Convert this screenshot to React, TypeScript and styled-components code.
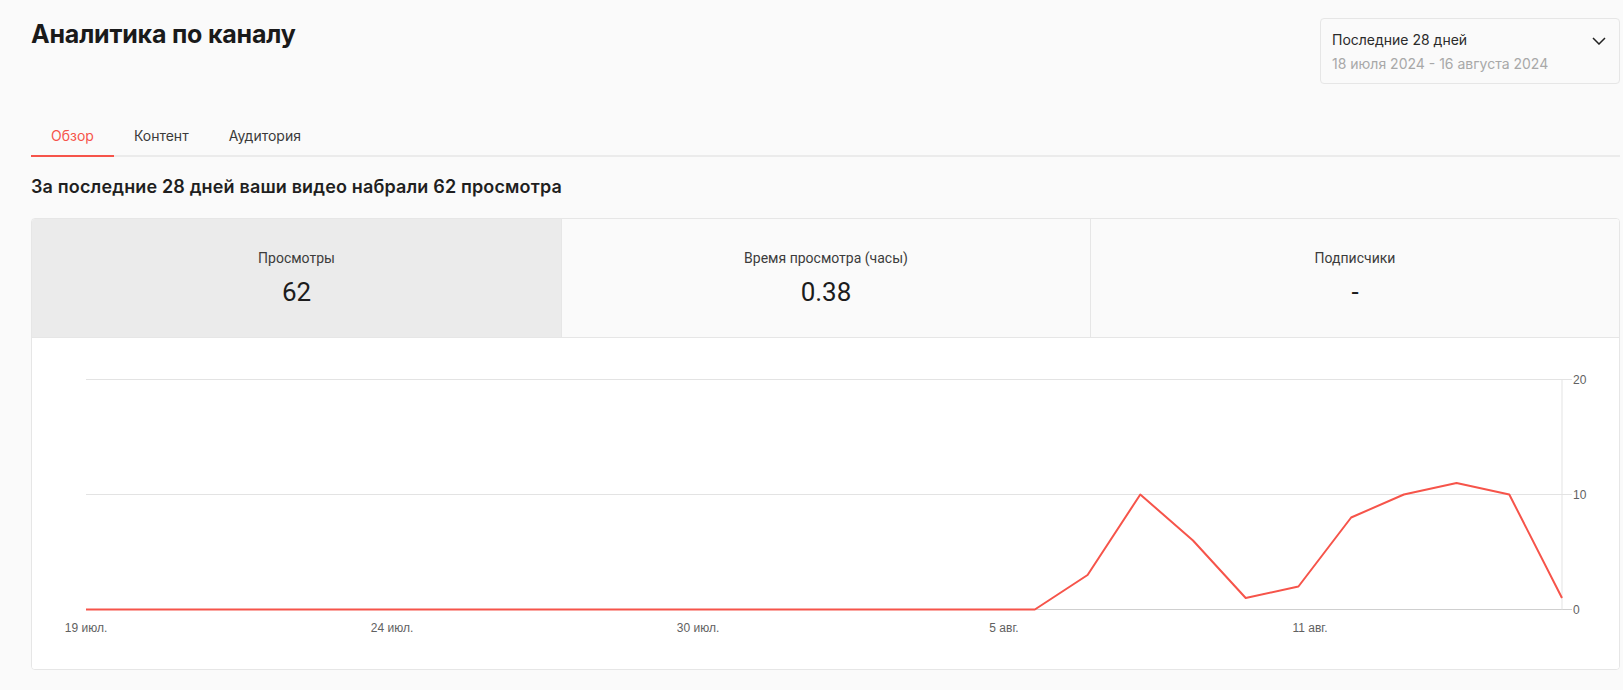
import styled, {createGlobalStyle} from "styled-components";

const GlobalStyle = createGlobalStyle`
    * {
        box-sizing: border-box;
    }
    body {
        margin: 0;
        background: #fafafa;
        font-family: Inter, "Noto Sans", sans-serif;
        color: #1c1c1c;
    }
`

const tabs = ["Обзор", "Контент", "Аудитория"]

const stats = [
    {label: "Просмотры", value: "62"},
    {label: "Время просмотра (часы)", value: "0.38"},
    {label: "Подписчики", value: "-"},
]

// daily views, 19 July .. 16 August
const views = [0, 0, 0, 0, 0, 0, 0, 0, 0, 0, 0, 0, 0, 0, 0, 0, 0, 0, 0, 3, 10, 6, 1, 2, 8, 10, 11, 10, 1]
const dateTicks = ["19 июл.", "24 июл.", "30 июл.", "5 авг.", "11 авг."]
const valueTicks = [20, 10, 0]

const CHART_W = 1587
const CHART_H = 331
const PLOT_LEFT = 54
const PLOT_RIGHT = 1530
const Y_TOP = 41.5
const Y_ZERO = 271.5
const Y_MAX = 20

const yOf = (v: number) => Y_ZERO - (v / Y_MAX) * (Y_ZERO - Y_TOP)

const ViewsChart = () => {
    const step = (PLOT_RIGHT - PLOT_LEFT) / (views.length - 1)
    const points = views.map((v, i) => `${PLOT_LEFT + i * step},${yOf(v)}`).join(" ")
    return (
        <svg width={CHART_W} height={CHART_H} viewBox={`0 0 ${CHART_W} ${CHART_H}`}>
            {valueTicks.map(t => (
                <g key={t}>
                    <line x1={PLOT_LEFT} x2={PLOT_RIGHT + 10} y1={yOf(t)} y2={yOf(t)}
                          stroke={t === 0 ? "#cfcfcf" : "#e3e3e3"} strokeWidth={1}/>
                    <text x={PLOT_RIGHT + 11} y={yOf(t) + 4.5} fontSize={12}
                          fontFamily="'Liberation Sans', Arial, sans-serif" fill="#616161">{t}</text>
                </g>
            ))}
            <line x1={PLOT_RIGHT} x2={PLOT_RIGHT} y1={Y_TOP} y2={Y_ZERO} stroke="#e3e3e3" strokeWidth={1}/>
            {dateTicks.map((d, i) => (
                <text key={d} x={PLOT_LEFT + i * 306} y={294} fontSize={12} textAnchor="middle"
                      fontFamily="'Liberation Sans', Arial, sans-serif" fill="#616161">{d}</text>
            ))}
            <polyline points={points} fill="none" stroke="#f6544a" strokeWidth={2} strokeLinejoin="round"/>
        </svg>
    )
}

export default function App() {
    return (
        <StyledPage>
            <GlobalStyle/>
            <StyledHeader>
                <Title>Аналитика по каналу</Title>
                <PeriodPicker>
                    <PeriodText>
                        <PeriodName>Последние 28 дней</PeriodName>
                        <PeriodRange>18 июля 2024 - 16 августа 2024</PeriodRange>
                    </PeriodText>
                    <svg width="14" height="8" viewBox="0 0 14 8">
                        <path d="M1 1l6 6 6-6" fill="none" stroke="#222" strokeWidth="1.5"/>
                    </svg>
                </PeriodPicker>
            </StyledHeader>

            <TabList>
                {tabs.map((t, i) => (
                    <Tab key={t} $active={i === 0}>{t}</Tab>
                ))}
            </TabList>

            <Summary>За последние 28 дней ваши видео набрали 62 просмотра</Summary>

            <Card>
                <StatsRow>
                    {stats.map((s, i) => (
                        <StatTile key={s.label} $active={i === 0}>
                            <StatLabel>{s.label}</StatLabel>
                            <StatValue>{s.value}</StatValue>
                        </StatTile>
                    ))}
                </StatsRow>
                <ChartBox>
                    <ViewsChart/>
                </ChartBox>
            </Card>
        </StyledPage>
    )
}

const StyledPage = styled.div`
    padding: 18px 3px 0 31px;
    min-height: 690px;
`
const StyledHeader = styled.div`
    display: flex;
    justify-content: space-between;
    align-items: flex-start;
`
const Title = styled.h1`
    margin: 0;
    padding-top: 1px;
    font-size: 25px;
    line-height: 30px;
    font-weight: 700;
    color: #1a1a1a;
    letter-spacing: -0.2px;
`
const PeriodPicker = styled.div`
    display: flex;
    justify-content: space-between;
    align-items: flex-start;
    width: 300px;
    height: 66px;
    padding: 11px 13px 11px 11px;
    border: 1px solid #e6e6e6;
    border-radius: 4px;
    background: #fafafa;

    svg {
        margin-top: 7px;
    }
`
const PeriodText = styled.div`
    display: flex;
    flex-direction: column;
    gap: 4px;
    font-size: 14px;
    line-height: 20px;
`
const PeriodName = styled.span`
    color: #2b2b2b;
`
const PeriodRange = styled.span`
    color: #a8a8a8;
`
const TabList = styled.div`
    display: flex;
    margin-top: 34px;
    border-bottom: 2px solid #ebebeb;
`
const Tab = styled.div<{ $active?: boolean }>`
    padding: 8px 20px 9px;
    margin-bottom: -2px;
    font-size: 14px;
    line-height: 20px;
    color: ${p => p.$active ? "#f6544a" : "#3a3a3a"};
    border-bottom: 2px solid ${p => p.$active ? "#f6544a" : "transparent"};
`
const Summary = styled.h2`
    margin: 18px 0 19px;
    font-size: 18px;
    line-height: 24px;
    font-weight: 600;
    letter-spacing: 0.15px;
    color: #1f1f1f;
`
const Card = styled.div`
    border: 1px solid #e6e6e6;
    border-radius: 4px;
    overflow: hidden;
    background: #fff;
`
const StatsRow = styled.div`
    display: grid;
    grid-template-columns: repeat(3, 1fr);
    height: 119px;
    border-bottom: 1px solid #e6e6e6;
`
const StatTile = styled.div<{ $active?: boolean }>`
    display: flex;
    flex-direction: column;
    align-items: center;
    padding-top: 29px;
    background: ${p => p.$active ? "#ebebeb" : "#fafafa"};
    font-family: Roboto, "Liberation Sans", sans-serif;

    & + & {
        border-left: 1px solid #e6e6e6;
    }
`
const StatLabel = styled.div`
    font-size: 14px;
    line-height: 20px;
    color: #3c3c3c;
`
const StatValue = styled.div`
    margin-top: 9px;
    font-size: 26px;
    line-height: 30px;
    color: #1c1c1c;
`
const ChartBox = styled.div`
    display: flex;
    background: #fff;
`
